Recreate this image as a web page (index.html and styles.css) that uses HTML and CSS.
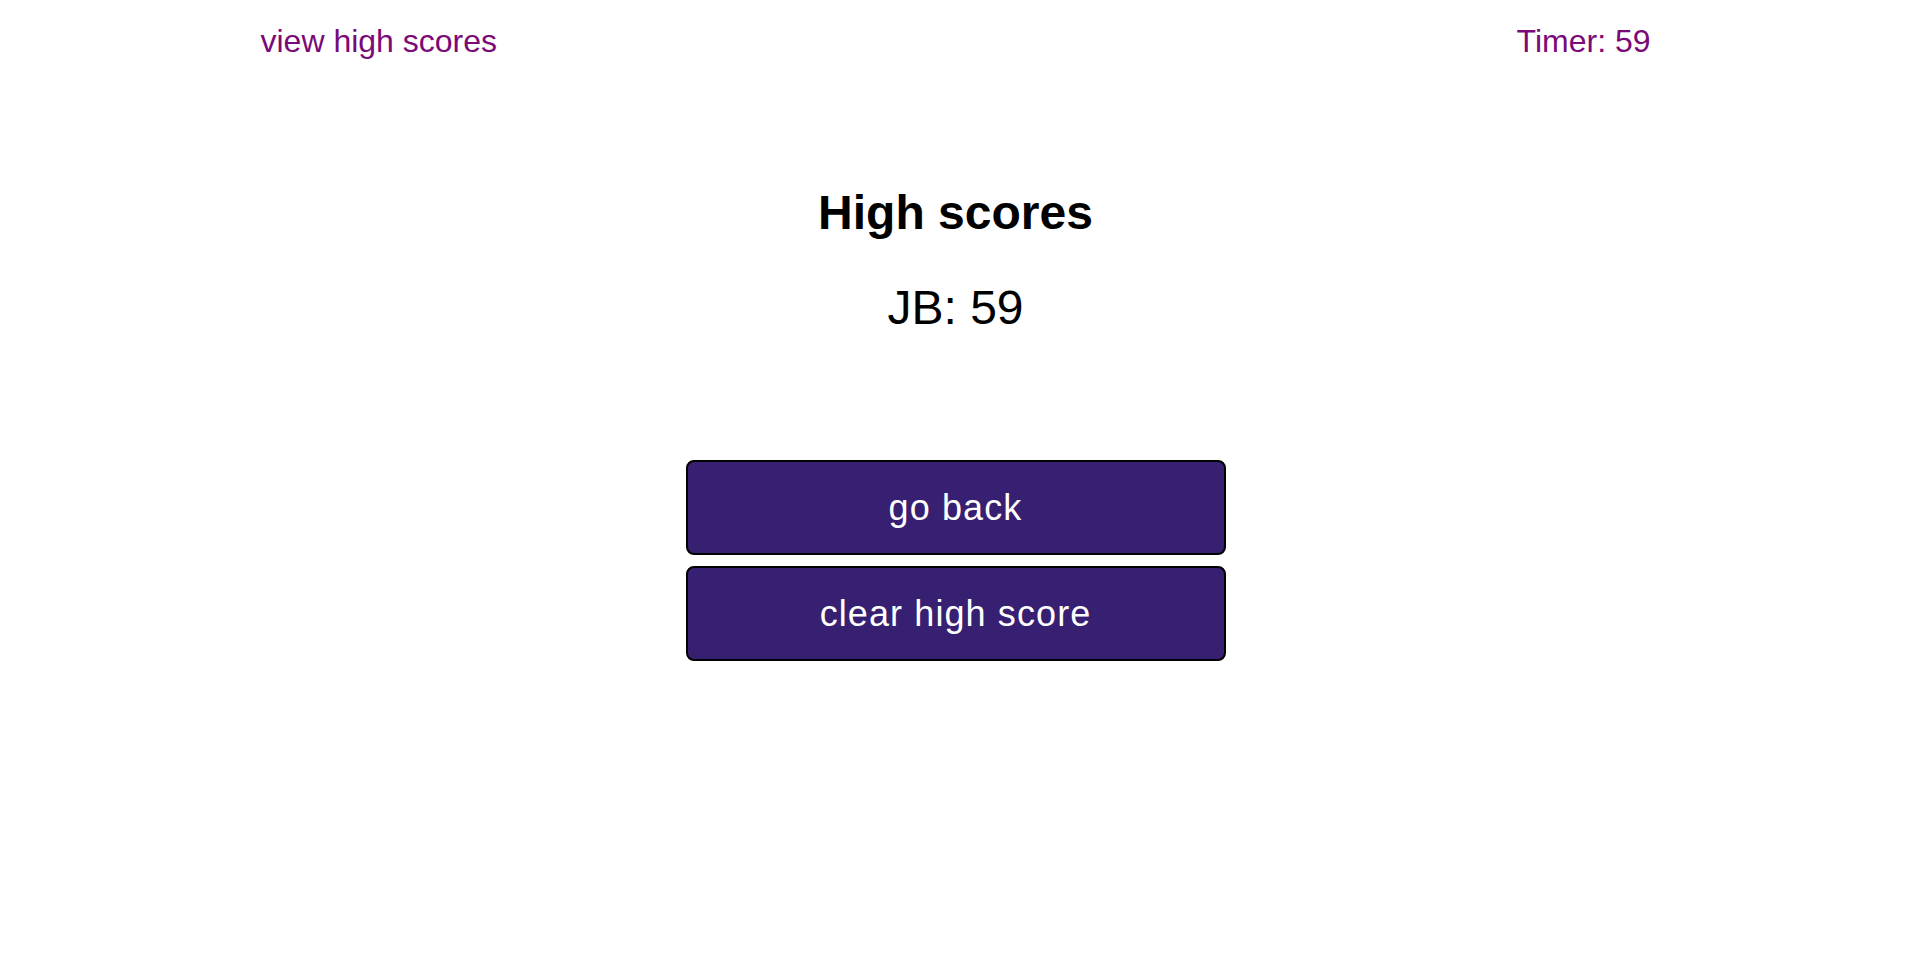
FILE: index.html
```html
<!DOCTYPE html>
<html lang="en">
<head>
<meta charset="utf-8">
<title>High scores</title>
<link rel="stylesheet" href="styles.css">
</head>
<body>
  <header class="topbar">
    <a class="topbar__link">view high scores</a>
    <span class="topbar__timer">Timer: 59</span>
  </header>
  <main class="scores">
    <h1 class="scores__title">High scores</h1>
    <p class="scores__entry">JB: 59</p>
    <div class="scores__actions">
      <button class="btn">go back</button>
      <button class="btn">clear high score</button>
    </div>
  </main>
</body>
</html>
```
FILE: styles.css
```css
html, body {
  margin: 0;
  padding: 0;
  background: #ffffff;
}

body {
  font-family: "Liberation Sans", Arial, sans-serif;
  color: #000;
}

.topbar {
  display: flex;
  justify-content: space-between;
  align-items: flex-start;
  width: 1390px;
  margin: 0 auto;
  padding-top: 23px;
  font-size: 32px;
  line-height: 37px;
  color: #7a0a78;
}

.topbar__link {
  color: #7a0a78;
  cursor: pointer;
}

.scores {
  display: flex;
  flex-direction: column;
  align-items: center;
}

.scores__title {
  margin: 125px 0 0;
  font-size: 48px;
  font-weight: bold;
  line-height: 55px;
}

.scores__entry {
  margin: 40px 0 0;
  font-size: 48px;
  line-height: 55px;
}

.scores__actions {
  display: flex;
  flex-direction: column;
  gap: 11px;
  margin-top: 125px;
}

.btn {
  box-sizing: border-box;
  width: 540px;
  height: 95px;
  border: 2px solid #000;
  border-radius: 8px;
  background: #371f71;
  color: #fff;
  font-family: "Liberation Sans", Arial, sans-serif;
  font-size: 36px;
  letter-spacing: 1.1px;
  padding: 0;
  cursor: pointer;
}
```
